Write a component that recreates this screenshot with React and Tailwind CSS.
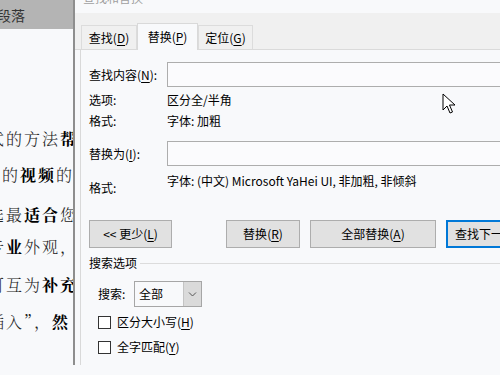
import React from 'react'

const UI = 'font-["Noto_Sans_CJK_SC",sans-serif]'
const DOC = 'font-["Noto_Serif_CJK_SC","Noto_Sans_CJK_SC",serif]'

const DOC_LINES = [
  { mt: 'mt-[100px]', ml: '-ml-[12px]', parts: [['式的方法', false], ['帮', true]] },
  { mt: 'mt-[16px]', ml: 'ml-[2px]', parts: [['的', false], ['视频', true], ['的', false]] },
  { mt: 'mt-[20px]', ml: '-ml-[12px]', parts: [['选最', false], ['适合', true], ['您', false]] },
  { mt: 'mt-[12px]', ml: '-ml-[12px]', parts: [['专', false], ['业', true], ['外观，', false]] },
  { mt: 'mt-[18px]', ml: '-ml-[12px]', parts: [['可互为', false], ['补充', true]] },
  { mt: 'mt-[17px]', ml: '-ml-[12px]', parts: [['插入”，', false], ['然', true]] },
]

function Key({ label, k }) {
  return (
    <>
      {label}(<u className="underline-offset-2">{k}</u>)
    </>
  )
}

function Tab({ active, children, w }) {
  return (
    <div
      className={`${w} flex items-center justify-center border border-b-0 ${
        active
          ? 'h-[27px] bg-[#f8f9fb] border-[#d9d9d9] -mb-px relative'
          : 'h-[24px] bg-[#f0f0f0] border-[#dcdcdc]'
      }`}
    >
      <span className="text-[12px] leading-[16px] text-black">{children}</span>
    </div>
  )
}

function Btn({ children, w, ml, primary }) {
  return (
    <div
      className={`${w} ${ml} h-[28px] shrink-0 flex items-center bg-[#e1e1e1] ${
        primary ? 'border-2 border-[#0078d7] justify-start pl-[7px]' : 'border border-[#adadad] justify-center'
      }`}
    >
      <span className="text-[12px] leading-[16px] text-black whitespace-nowrap">{children}</span>
    </div>
  )
}

function Check({ children, mt }) {
  return (
    <div className={`${mt} ml-[9px] h-[20px] flex items-center gap-[6px]`}>
      <div className="w-[13px] h-[13px] border border-[#333] bg-white" />
      <span className="text-[12px] leading-[16px] text-black">{children}</span>
    </div>
  )
}

export default function App() {
  return (
    <div className={`relative w-[500px] h-[375px] overflow-hidden bg-[#f8f9fb] flex ${UI}`}>
      {/* document behind the dialog */}
      <div className="w-[73px] h-[365px] shrink-0 flex flex-col overflow-hidden">
        <div className="h-[29px] bg-[#b4b4b4] flex items-center">
          <span className="-ml-[3px] text-[14px] leading-[18px] text-[#333] whitespace-nowrap">段落</span>
        </div>
        {DOC_LINES.map((line, i) => (
          <div
            key={i}
            className={`${line.mt} ${line.ml} h-[20px] flex items-center whitespace-nowrap text-[16px] leading-[20px] tracking-[2px] text-[#222] ${DOC}`}
          >
            {line.parts.map(([t, b], j) => (
              <span key={j} className={b ? 'font-bold text-black' : 'font-light'}>{t}</span>
            ))}
          </div>
        ))}
      </div>
      <div className="w-[2px] h-[365px] bg-[#8e8e8e] shrink-0" />

      {/* find & replace dialog */}
      <div className="flex-1 h-[365px] flex flex-col min-w-0">
        <div className="h-[13px] overflow-hidden pl-[8px]">
          <div className="-mt-[10px] text-[12px] leading-[16px] text-[#a0a0a0]">查找和替换</div>
        </div>

        <div className="h-[37px] bg-[#f0f0f0] border-b border-[#dadada] flex items-end pl-[6px]">
          <Tab w="w-[56px]"><Key label="查找" k="D" /></Tab>
          <Tab w="w-[61px]" active><Key label="替换" k="P" /></Tab>
          <Tab w="w-[55px]"><Key label="定位" k="G" /></Tab>
        </div>

        <div className="flex-1 ml-[5px] border-l border-[#d9d9d9] pl-[8px] flex flex-col">
          <div className="mt-[12px] flex items-center">
            <div className="w-[78px] text-[12px] leading-[16px] text-black whitespace-nowrap">
              <Key label="查找内容" k="N" />:
            </div>
            <div className="flex-1 h-[25px] -mr-[10px] border border-[#adadad] bg-[#fbfbfd]" />
          </div>

          <div className="mt-[3px] h-[20px] flex items-center text-[12px] leading-[16px] text-black">
            <div className="w-[78px]">选项:</div>
            <div>区分全/半角</div>
          </div>
          <div className="mt-[1px] h-[20px] flex items-center text-[12px] leading-[16px] text-black">
            <div className="w-[78px]">格式:</div>
            <div>字体: 加粗</div>
          </div>

          <div className="mt-[10px] flex items-center">
            <div className="w-[78px] text-[12px] leading-[16px] text-black whitespace-nowrap">
              <Key label="替换为" k="I" />:
            </div>
            <div className="flex-1 h-[25px] -mr-[10px] border border-[#adadad] bg-[#fbfbfd]" />
          </div>

          <div className="mt-[5px] flex items-start text-[12px] leading-[20px] text-black">
            <div className="w-[78px] mt-[7px]">格式:</div>
            <div className="whitespace-nowrap">字体: (中文) Microsoft YaHei UI, 非加粗, 非倾斜</div>
          </div>

          <div className="mt-[22px] flex items-center">
            <Btn w="w-[83px]">&lt;&lt; <Key label="更少" k="L" /></Btn>
            <Btn w="w-[74px]" ml="ml-[54px]"><Key label="替换" k="R" /></Btn>
            <Btn w="w-[126px]" ml="ml-[10px]"><Key label="全部替换" k="A" /></Btn>
            <Btn w="w-[126px]" ml="ml-[10px]" primary><Key label="查找下一处" k="F" /></Btn>
          </div>

          <div className="mt-[5px] h-[20px] flex items-center gap-[3px]">
            <span className="text-[12px] leading-[16px] text-black whitespace-nowrap">搜索选项</span>
            <div className="flex-1 h-px bg-[#dcdcdc]" />
          </div>

          <div className="mt-[8px] ml-[9px] flex items-center">
            <span className="w-[36px] text-[12px] leading-[16px] text-black">搜索:</span>
            <div className="w-[68px] h-[26px] border border-[#a6a6a6] bg-[#f8f9fb] flex items-center">
              <span className="flex-1 pl-[4px] text-[12px] leading-[16px] text-black">全部</span>
              <div className="w-[18px] h-full bg-[#dadada] border-l border-[#c4c4c4] flex items-center justify-center">
                <svg width="9" height="6" viewBox="0 0 9 6" fill="none" stroke="#555" strokeWidth="1">
                  <path d="M1 1.5l3.5 3.5 3.5-3.5" />
                </svg>
              </div>
            </div>
          </div>

          <Check mt="mt-[5px]"><Key label="区分大小写" k="H" /></Check>
          <Check mt="mt-[5px]"><Key label="全字匹配" k="Y" /></Check>
        </div>
      </div>

      {/* mouse pointer */}
      <svg className="absolute left-[442px] top-[93px]" width="13" height="21" viewBox="0 0 13 21">
        <path d="M1 1v16l4-4 3 7 2.5-1-3-7h5.5z" fill="#fff" stroke="#000" strokeWidth="1" strokeLinejoin="round" />
      </svg>
    </div>
  )
}
